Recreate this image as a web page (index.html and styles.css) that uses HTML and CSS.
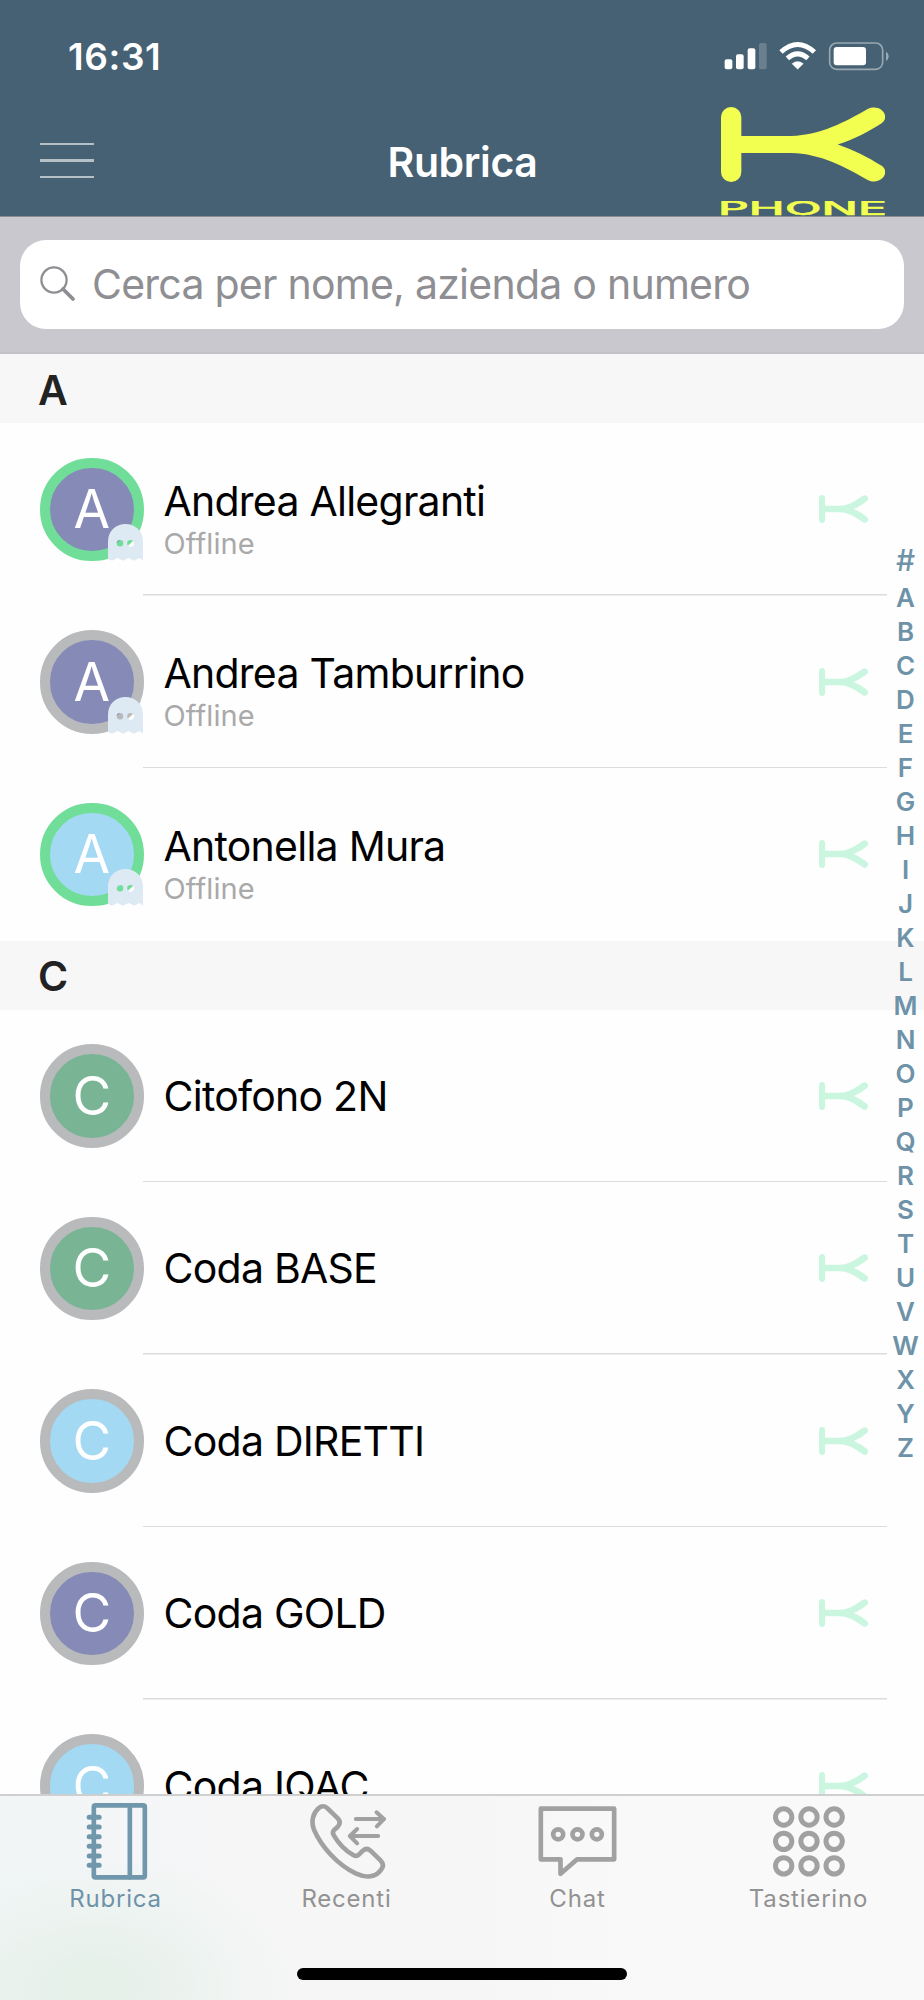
FILE: index.html
```html
<!DOCTYPE html>
<html lang="it">
<head>
    <meta charset="UTF-8">
    <title>Rubrica</title>
    <link rel="stylesheet" href="styles.css">
</head>
<body>
<svg class="defs" width="0" height="0">
    <symbol id="k-logo" viewBox="0 0 492 223" preserveAspectRatio="none">
        <rect x="0" y="0" width="61" height="223" rx="30"/>
        <path d="M50 86H210C300 84 370 45 440 6C478-12 510 28 482 48C440 74 400 95 350 111.500C400 128 440 149 482 175C510 195 478 235 440 217C370 178 300 139 210 137H50Z"/>
    </symbol>
    <symbol id="ghost" viewBox="0 0 35 37">
        <path fill-rule="evenodd" d="M0 17.500C0 7 8 0 17.500 0S35 7 35 17.500V36.500L31.500 34L26 36.800L20.500 34L15 36.800L9.500 34L4 36.800L0 35ZM12 16A3.300 3.300 0 0 0 12 22.600A3.300 3.300 0 0 0 12 16ZM22.500 16A3.300 3.300 0 0 0 22.500 22.600A3.300 3.300 0 0 0 22.500 16Z"/>
        <path fill="#fff" d="M25 17.200A3.300 3.300 0 0 1 20 21.600Z"/>
    </symbol>
</svg>
<div class="app">
    <header class="header">
        <div class="status">
            <span class="time">16:31</span>
            <svg class="status-icons" width="165" height="30" viewBox="786 122 495 90">
                <g fill="#fff">
                    <rect x="788" y="177" width="23" height="30" rx="6"/>
                    <rect x="822" y="162" width="23" height="45" rx="6"/>
                    <rect x="857" y="144" width="23" height="63" rx="6"/>
                    <rect x="891" y="128" width="23" height="79" rx="6" opacity=".2"/>
                    <path d="M1007 207L990 190Q1007 177 1024 190Z" stroke="#fff" stroke-width="1"/>
                    <rect x="1115" y="140" width="97" height="55" rx="9"/>
                    <path d="M1272 154Q1280 158 1280 168T1272 183Z" opacity=".45"/>
                </g>
                <path d="M957 155Q1007 110 1057 155M976 174Q1007 147 1038 174" fill="none" stroke="#fff" stroke-width="15"/>
                <rect x="1103" y="128" width="159" height="79" rx="21" fill="none" stroke="#fff" stroke-width="5" opacity=".45"/>
            </svg>
        </div>
        <div class="navbar">
            <div class="menu"><span></span><span></span><span></span></div>
            <h1>Rubrica</h1>
            <div class="brand">
                <svg width="164" height="75" fill="#f3ff50"><use href="#k-logo"/></svg>
                <svg class="brand-name" width="164" height="15" viewBox="0 0 164 15"><text x="-3" y="14.300" textLength="169" lengthAdjust="spacingAndGlyphs">PHONE</text></svg>
            </div>
        </div>
    </header>
    <div class="search">
        <div class="search-box">
            <svg width="36" height="36" viewBox="0 0 36 36" fill="none" stroke="#8e8e93"><circle cx="14" cy="14" r="12.600" stroke-width="2.300"/><path d="M23 23L33 33" stroke-width="3.800" stroke-linecap="round"/></svg>
            <span>Cerca per nome, azienda o numero</span>
        </div>
    </div>
    <main class="contacts">
        <h2 class="section">A</h2>
        <div class="contact">
            <div class="avatar violet online">A<svg class="ghost"><use href="#ghost"/></svg></div>
            <div class="info with-state"><div class="name">Andrea Allegranti</div><div class="state">Offline</div></div>
            <svg class="k"><use href="#k-logo"/></svg>
        </div>
        <div class="contact">
            <div class="avatar violet">A<svg class="ghost"><use href="#ghost"/></svg></div>
            <div class="info with-state"><div class="name">Andrea Tamburrino</div><div class="state">Offline</div></div>
            <svg class="k"><use href="#k-logo"/></svg>
        </div>
        <div class="contact last">
            <div class="avatar sky online">A<svg class="ghost"><use href="#ghost"/></svg></div>
            <div class="info with-state"><div class="name">Antonella Mura</div><div class="state">Offline</div></div>
            <svg class="k"><use href="#k-logo"/></svg>
        </div>
        <h2 class="section">C</h2>
        <div class="contact">
            <div class="avatar green">C</div>
            <div class="info"><div class="name">Citofono 2N</div></div>
            <svg class="k"><use href="#k-logo"/></svg>
        </div>
        <div class="contact">
            <div class="avatar green">C</div>
            <div class="info"><div class="name">Coda BASE</div></div>
            <svg class="k"><use href="#k-logo"/></svg>
        </div>
        <div class="contact">
            <div class="avatar sky">C</div>
            <div class="info"><div class="name">Coda DIRETTI</div></div>
            <svg class="k"><use href="#k-logo"/></svg>
        </div>
        <div class="contact">
            <div class="avatar violet">C</div>
            <div class="info"><div class="name">Coda GOLD</div></div>
            <svg class="k"><use href="#k-logo"/></svg>
        </div>
        <div class="contact last">
            <div class="avatar sky">C</div>
            <div class="info"><div class="name">Coda IQAC</div></div>
            <svg class="k"><use href="#k-logo"/></svg>
        </div>
    </main>
    <nav class="index">
        <span class="hash">#</span><span>A</span><span>B</span><span>C</span><span>D</span><span>E</span><span>F</span><span>G</span><span>H</span><span>I</span><span>J</span><span>K</span><span>L</span><span>M</span><span>N</span><span>O</span><span>P</span><span class="q">Q</span><span>R</span><span>S</span><span>T</span><span>U</span><span>V</span><span>W</span><span>X</span><span>Y</span><span>Z</span>
    </nav>
    <footer class="footer">
        <div class="tabs">
            <div class="tab active">
                <svg viewBox="226.500 185 240 240">
                    <rect x="280" y="198" width="153" height="216" rx="5" stroke-width="14"/>
                    <path d="M388 198V414" stroke-width="14"/>
                    <path d="M266 234H296M266 263H296M266 292H296M266 321H296M266 350H296M266 378H296" stroke-width="15"/>
                </svg>
                <span>Rubrica</span>
            </div>
            <div class="tab">
                <svg viewBox="919.500 185 240 240" stroke-width="12">
                    <path stroke-width="14" d="M955 206C963 199 973 199 981 207L1012 237C1020 246 1019 254 1012 262L1000 273C996 278 997 283 1000 288C1014 312 1033 333 1058 347C1065 351 1070 351 1075 346L1087 334C1095 327 1102 327 1110 334L1140 363C1149 372 1149 382 1142 391C1126 414 1098 417 1067 403C1010 376 962 321 940 270C931 245 938 220 955 206Z"/>
                    <path d="M1066 239H1151M1128 219L1150 239L1129 261M1133 290H1048M1070 269L1048 290L1070 312"/>
                </svg>
                <span>Recenti</span>
            </div>
            <div class="tab">
                <svg viewBox="226.500 185 240 240" stroke-width="14">
                    <path d="M235 208H455V360H344L294 403V360H235Z"/>
                    <circle cx="287" cy="285" r="15"/><circle cx="345" cy="285" r="15"/><circle cx="403" cy="285" r="15"/>
                </svg>
                <span>Chat</span>
            </div>
            <div class="tab">
                <svg viewBox="919.500 185 240 240" stroke-width="15">
                    <circle cx="963.500" cy="233" r="24.500"/><circle cx="1039.500" cy="233" r="24.500"/><circle cx="1115" cy="233" r="24.500"/>
                    <circle cx="963.500" cy="306" r="24.500"/><circle cx="1039.500" cy="306" r="24.500"/><circle cx="1115" cy="306" r="24.500"/>
                    <circle cx="963.500" cy="379.500" r="24.500"/><circle cx="1039.500" cy="379.500" r="24.500"/><circle cx="1115" cy="379.500" r="24.500"/>
                </svg>
                <span>Tastierino</span>
            </div>
        </div>
        <div class="home-bar"></div>
    </footer>
</div>
</body>
</html>
```
FILE: styles.css
```css
* {
    box-sizing: border-box;
}
body {
    margin: 0;
    font-family: Inter, "Liberation Sans", sans-serif;
    background-color: #fefefe;
}
.defs {
    position: absolute;
}
.app {
    position: relative;
    display: flex;
    flex-direction: column;
    width: 924px;
    height: 2000px;
    overflow: hidden;
}
.header {
    height: 217px;
    flex: none;
    background-color: #456173;
    border-bottom: 1px solid #8b8c8f;
    overflow: hidden;
}
.status {
    display: flex;
    justify-content: space-between;
    align-items: center;
    height: 107px;
    padding: 5px 35px 0 68px;
    color: #fff;
}
.time {
    font-size: 37px;
    font-weight: 600;
    letter-spacing: 0.6px;
}
.navbar {
    display: grid;
    grid-template-columns: 1fr auto 1fr;
    height: 109px;
    padding: 0 39px 0 40px;
}
.menu {
    display: flex;
    flex-direction: column;
    gap: 14px;
    padding-top: 36px;
}
.menu span {
    width: 54px;
    height: 2.300px;
    background-color: #b5c0c7;
}
.navbar h1 {
    margin: 0;
    padding-top: 30px;
    line-height: 50px;
    font-size: 41px;
    font-weight: 600;
    letter-spacing: -0.4px;
    color: #fff;
}
.brand {
    display: flex;
    flex-direction: column;
    align-items: flex-end;
    gap: 19px;
}
.brand-name {
    flex: none;
    font-size: 19px;
    font-weight: 500;
    fill: #f3ff50;
    stroke: #f3ff50;
    stroke-width: 0.4px;
}
.search {
    flex: none;
    height: 137px;
    padding: 23px 20px 0;
    background-color: #c9c8ce;
    border-bottom: 2px solid #c2c1c6;
}
.search-box {
    display: flex;
    align-items: center;
    gap: 16px;
    height: 89px;
    padding: 0 0 2px 20px;
    border-radius: 26px;
    background-color: #fff;
    font-size: 41px;
    letter-spacing: -0.750px;
    color: #8e8e93;
}
.contacts {
    flex: 1;
    overflow: hidden;
}
.section {
    display: flex;
    align-items: center;
    height: 69px;
    margin: 0;
    padding: 2px 0 0 38px;
    background-color: #f7f7f7;
    font-size: 41px;
    font-weight: 600;
    color: #222;
}
.contact {
    display: flex;
    align-items: center;
    height: 172.500px;
    margin-right: 37px;
    padding: 0 19px 0 40px;
    background: linear-gradient(#dcdcde, #dcdcde) 143px 100% / 100% 1.500px no-repeat;
}
.contact.last {
    background: none;
}
.avatar {
    position: relative;
    display: flex;
    align-items: center;
    justify-content: center;
    width: 103.500px;
    height: 103.500px;
    border: 10px solid #b9babc;
    border-radius: 50%;
    font-size: 53px;
    color: #fff;
}
.online {
    border-color: #70de98;
}
.violet {
    background-color: #858bb6;
}
.sky {
    background-color: #a3d9f3;
}
.green {
    background-color: #79b594;
}
.ghost {
    position: absolute;
    right: -9px;
    bottom: -10px;
    width: 35px;
    height: 37px;
    fill: #dde9f3;
}
.info {
    flex: 1;
    padding-left: 20px;
}
.with-state {
    padding-top: 19px;
}
.name {
    line-height: 50px;
    font-size: 41px;
    letter-spacing: -0.750px;
    color: #000;
}
.state {
    line-height: 36px;
    font-size: 29px;
    letter-spacing: 0.1px;
    color: #a9a9a9;
}
.k {
    width: 49px;
    height: 28px;
    fill: #caf6e0;
}
.index {
    position: absolute;
    top: 543px;
    right: 0;
    display: flex;
    flex-direction: column;
    width: 37px;
    text-align: center;
    line-height: 34px;
    font-size: 26px;
    font-weight: 600;
    color: #6e93a9;
}
.index .hash {
    height: 38px;
    font-size: 30px;
    font-weight: 500;
}
.footer {
    flex: none;
    display: flex;
    flex-direction: column;
    justify-content: space-between;
    align-items: center;
    height: 206px;
    padding: 5px 0 20px;
    border-top: 2px solid #cfcfd0;
    background: radial-gradient(ellipse 200px 130px at 95px 190px, #e4f0e8, rgba(228, 240, 232, 0)), linear-gradient(90deg, #f1f5f6, #f6f6f7 25%, #f6f6f6 50%, #f9f9f9 70%);
}
.tabs {
    display: grid;
    grid-template-columns: repeat(4, 1fr);
    width: 100%;
}
.tab {
    display: flex;
    flex-direction: column;
    align-items: center;
    font-size: 24px;
    line-height: 36px;
    letter-spacing: 0.8px;
    color: #929292;
}
.tab svg {
    width: 80px;
    height: 80px;
    fill: none;
    stroke: #a1a1a1;
    stroke-linecap: round;
    stroke-linejoin: round;
}
.tab.active {
    color: #6e93a9;
}
.tab.active svg {
    stroke: #7197ac;
}
.home-bar {
    width: 330px;
    height: 12px;
    border-radius: 6px;
    background-color: #000;
}
```
